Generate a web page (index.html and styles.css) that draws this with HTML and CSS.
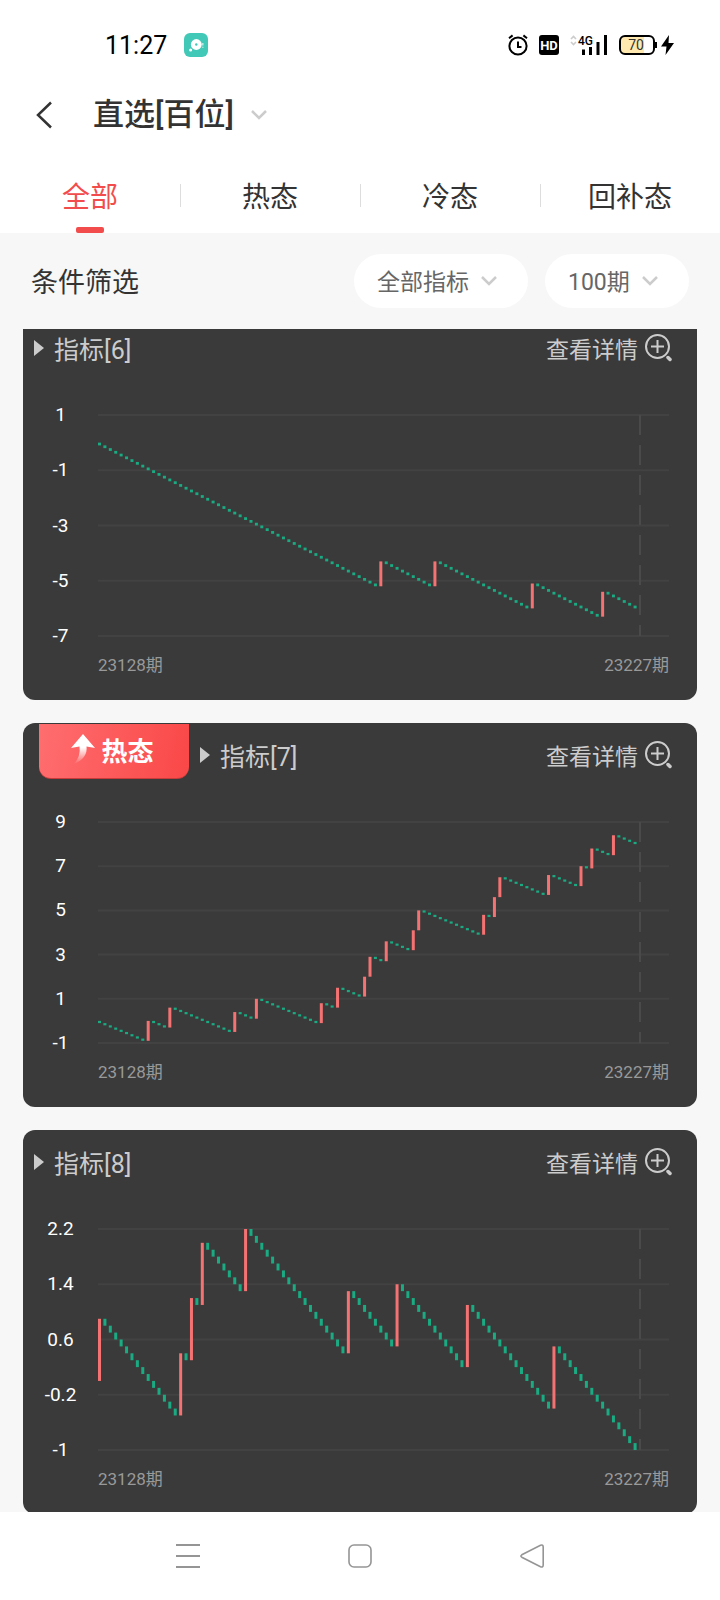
FILE: index.html
```html
<!DOCTYPE html>
<html lang="zh-CN">
<head>
    <meta charset="utf-8">
    <title>直选[百位]</title>
    <meta name="viewport" content="width=device-width, initial-scale=1">
    <link rel="stylesheet" href="styles.css">
</head>
<body>
    <div class="status-bar">
        <span class="time">11:27</span>
        <svg class="app-icon" width="24" height="24" viewBox="0 0 24 24">
            <rect width="24" height="24" rx="6" fill="#42c8b7"/>
            <circle cx="12.3" cy="11.5" r="5.4" fill="#fff"/>
            <circle cx="12.3" cy="11.5" r="1.2" fill="#42c8b7"/>
            <circle cx="6.6" cy="17" r="1.5" fill="#fff"/>
            <path d="M18.8 10v2.5M18.8 13.8v1" stroke="#c5eee8" stroke-width="1.4"/>
        </svg>
        <div class="status-icons">
            <svg width="20" height="22" viewBox="0 0 20 22" fill="none" stroke="#000" stroke-width="2">
                <circle cx="10" cy="12" r="8.6"/>
                <path d="M10 7.5V13h3.5M1 4.2L4.6 1.4M19 4.2L15.4 1.4"/>
            </svg>
            <svg width="20" height="20" viewBox="0 0 20 20">
                <rect width="20" height="20" rx="3" fill="#000"/>
                <text class="hd-text" x="10" y="15" text-anchor="middle">HD</text>
            </svg>
            <svg width="38" height="24" viewBox="0 -2 38 24">
                <path d="M1 4l2.5-2.5L6 4M1 7l2.5 2.5L6 7" fill="none" stroke="#ccc" stroke-width="1.6"/>
                <text class="net-text" x="8" y="10">4G</text>
                <path d="M13.5 14.5V20M20.5 12v8M28 7v13M35.5 0v20" stroke="#000" stroke-width="3"/>
            </svg>
            <svg width="56" height="20" viewBox="0 0 56 20">
                <rect x="1" y="1" width="34" height="18" rx="5" fill="#fff"/>
                <path d="M6 1h19v18H6a5 5 0 0 1-5-5V6a5 5 0 0 1 5-5z" fill="#ffe9b0"/>
                <rect x="1" y="1" width="34" height="18" rx="5" fill="none" stroke="#000" stroke-width="2"/>
                <path d="M37 7v6" stroke="#000" stroke-width="2"/>
                <text class="battery-text" x="17" y="15" text-anchor="middle">70</text>
                <path d="M50 0L42 11.5h5.5L46.5 20L55 8h-5.5z" fill="#000"/>
            </svg>
        </div>
    </div>

    <header class="title-bar">
        <button class="icon-btn back-btn" aria-label="返回">
            <svg width="16" height="28" viewBox="0 0 16 28" fill="none" stroke="#333" stroke-width="2.5"><path d="M15 1.5L2 14l13 12.5"/></svg>
        </button>
        <h1>直选[百位]</h1>
        <button class="icon-btn" aria-label="切换">
            <svg width="18" height="12" viewBox="0 0 18 12" fill="none" stroke="#ccc" stroke-width="2.5"><path d="M2 2l7 7 7-7"/></svg>
        </button>
    </header>

    <nav class="tabs">
        <a href="#all" class="active">全部</a>
        <a href="#hot">热态</a>
        <a href="#cold">冷态</a>
        <a href="#back">回补态</a>
    </nav>

    <div class="filter-bar">
        <span class="filter-label">条件筛选</span>
        <div class="pill">
            <select aria-label="指标">
                <option>全部指标</option>
            </select>
            <svg width="18" height="12" viewBox="0 0 18 12" fill="none" stroke="#ccc" stroke-width="2.5"><path d="M2 2l7 7 7-7"/></svg>
        </div>
        <div class="pill">
            <select aria-label="期数">
                <option>100期</option>
            </select>
            <svg width="18" height="12" viewBox="0 0 18 12" fill="none" stroke="#ccc" stroke-width="2.5"><path d="M2 2l7 7 7-7"/></svg>
        </div>
    </div>

    <main class="card-list" id="cardList">
        <!-- Cards are added by script.js -->
    </main>

    <nav class="bottom-nav">
        <button class="icon-btn" aria-label="菜单">
            <svg width="24" height="24" viewBox="0 0 24 24" stroke="#959595" stroke-width="2"><path d="M0 1h24M0 12h24M0 23h24"/></svg>
        </button>
        <button class="icon-btn" aria-label="主页">
            <svg width="24" height="24" viewBox="0 0 24 24" fill="none" stroke="#959595" stroke-width="1.6"><rect x="1" y="1" width="22" height="22" rx="5"/></svg>
        </button>
        <button class="icon-btn" aria-label="后退">
            <svg width="24" height="24" viewBox="0 0 24 24" fill="none" stroke="#959595" stroke-width="1.6"><path d="M1.8 10.8L20.5 1.2Q23.2 0.4 23.2 3V21Q23.2 23.6 20.5 22.8L1.8 13.2Q0 12 1.8 10.8z"/></svg>
        </button>
    </nav>
    <script src="script.js"></script>
</body>
</html>
```
FILE: styles.css
```css
* {
    box-sizing: border-box;
}
body {
    font-family: Roboto, "Noto Sans CJK SC", sans-serif;
    margin: 0;
    height: 100vh;
    display: flex;
    flex-direction: column;
    background: #f7f7f7;
    color: #333;
}
svg {
    display: block;
    flex: none;
}
.icon-btn {
    border: none;
    background: none;
    padding: 0;
    cursor: pointer;
}

/* status bar */
.status-bar {
    flex: none;
    height: 90px;
    padding: 0 45px 0 105px;
    display: flex;
    align-items: center;
    background: #fff;
    color: #000;
}
.time {
    font-size: 25px;
}
.app-icon {
    margin-left: 17px;
}
.status-icons {
    margin-left: auto;
    display: flex;
    align-items: center;
    gap: 11px;
}
.hd-text {
    font-size: 13px;
    font-weight: bold;
    fill: #fff;
}
.net-text {
    font-size: 12px;
    font-weight: 500;
}
.battery-text {
    font-size: 14px;
    fill: #333;
}

/* title and tabs */
.title-bar {
    flex: none;
    height: 69px;
    padding: 0 36px 19px;
    display: flex;
    align-items: center;
    background: #fff;
}
.back-btn {
    margin-right: 41px;
}
.title-bar h1 {
    margin: 0 16px 0 0;
    font-size: 31px;
    line-height: 40px;
    font-weight: 500;
}
.tabs {
    flex: none;
    height: 74px;
    display: flex;
    background: #fff;
}
.tabs a {
    flex: 1;
    padding-bottom: 2px;
    display: flex;
    align-items: center;
    justify-content: center;
    position: relative;
    color: #333;
    font-size: 28px;
    text-decoration: none;
}
.tabs a + a::before {
    content: "";
    position: absolute;
    left: 0;
    width: 1px;
    height: 23px;
    background: #ddd;
}
.tabs .active {
    color: #f24c4c;
}
.tabs .active::after {
    content: "";
    position: absolute;
    bottom: 0;
    width: 28px;
    height: 6px;
    border-radius: 2px;
    background: #f24c4c;
}

/* filters */
.filter-bar {
    flex: none;
    height: 96px;
    padding: 0 31px;
    display: flex;
    align-items: center;
    gap: 17px;
}
.filter-label {
    margin-right: auto;
    padding-bottom: 2px;
    font-size: 27px;
}
.pill {
    position: relative;
}
.pill select {
    appearance: none;
    height: 54px;
    padding: 2px 59px 0 23px;
    border: none;
    border-radius: 27px;
    background: #fff;
    color: #666;
    font-family: inherit;
    font-size: 23px;
}
.pill svg {
    position: absolute;
    right: 30px;
    top: 21px;
    pointer-events: none;
}

/* cards */
.card-list {
    flex: 1;
    min-height: 0;
    padding: 0 23px;
    overflow: hidden;
}
.card {
    margin-bottom: 23px;
    padding-bottom: 23px;
    border-radius: 12px;
    background: #3a3a3a;
    color: #ccc;
}
/* list is scrolled a little under the filters */
.card:first-child {
    margin-top: -13px;
}
.card-header {
    height: 64px;
    padding-right: 25px;
    display: flex;
    align-items: center;
}
.hot-badge {
    align-self: flex-start;
    width: 150px;
    height: 55px;
    margin: 1px 0 0 16px;
    padding-bottom: 4px;
    display: flex;
    align-items: center;
    justify-content: center;
    gap: 5px;
    border-radius: 0 0 12px 12px;
    border-bottom: 1px solid #c93b3b;
    background: linear-gradient(100deg, #ff6e70, #fa4747);
    color: #fff;
    font-size: 26px;
    font-weight: bold;
}
.hot-badge svg {
    margin-left: -4px;
}
.card h2 {
    margin: 0 auto 0 11px;
    display: flex;
    align-items: center;
    gap: 10px;
    font-size: 25px;
    font-weight: normal;
}
.detail-link {
    display: flex;
    align-items: center;
    gap: 7px;
    color: #ccc;
    font-size: 23px;
    text-decoration: none;
}
.chart {
    display: flex;
    margin-top: 34px;
    padding-right: 28px;
}
.y-axis {
    width: 75px;
    flex: none;
    margin: -11px 0;
    display: flex;
    flex-direction: column;
    justify-content: space-between;
    color: #fff;
    font-size: 19px;
    line-height: 24px;
    text-align: center;
}
.plot {
    flex: 1;
    min-width: 0;
    height: 223px;
}
.grid-line {
    stroke: #424242;
    stroke-width: 2;
}
.now-line {
    stroke: #4a4a4a;
    stroke-width: 2;
    stroke-dasharray: 20 10;
}
.bar-up {
    fill: #f47272;
}
.bar-down {
    fill: #1aab83;
}
.x-axis {
    margin: 16px 28px 0 75px;
    display: flex;
    justify-content: space-between;
    color: #999;
    font-size: 17px;
    line-height: 24px;
}

/* system navigation */
.bottom-nav {
    flex: none;
    height: 88px;
    padding: 0 28px;
    display: flex;
    align-items: center;
    justify-content: space-evenly;
    background: #fff;
}
```
FILE: script.js
```js
// ups: periods where the indicator hit, every other period loses 0.1
const charts = [
    { id: 6, labels: [1, -1, -3, -5, -7], ups: [52, 62, 80, 93] },
    {
        id: 7, hot: true, labels: [9, 7, 5, 3, 1, -1],
        ups: [9, 13, 25, 29, 41, 44, 49, 50, 53, 58, 59, 71, 73, 74, 83, 89, 91, 95]
    },
    { id: 8, labels: [2.2, 1.4, 0.6, -0.2, -1], ups: [0, 15, 17, 19, 27, 46, 55, 68, 84] }
];

const PERIODS = 100;
const WIDTH = 571;
const HEIGHT = 221;
const STEP = 5.41;

const badge = `
    <span class="hot-badge">
        <svg width="26" height="32" viewBox="0 0 26 32">
            <defs>
                <linearGradient id="arrowFade" x1="0" y1="0" x2="0" y2="1">
                    <stop offset="0.45" stop-color="#fff"/>
                    <stop offset="1" stop-color="#fff" stop-opacity="0"/>
                </linearGradient>
            </defs>
            <path d="M13 1L25 15Q21 14 16.5 13.5Q18 25 4 31Q11 23 9.5 13.5Q5 14 1 15z" fill="url(#arrowFade)"/>
        </svg>
        热态
    </span>`;

function drawPlot(chart) {
    const max = chart.labels[0];
    const min = chart.labels[chart.labels.length - 1];
    const toY = value => 1 + (max - value) / (max - min) * HEIGHT;

    const grid = chart.labels.map(label =>
        `<line class="grid-line" x1="0" x2="${WIDTH}" y1="${toY(label)}" y2="${toY(label)}"/>`
    ).join('');

    let value = 0;
    let bars = '';
    for (let i = 0; i < PERIODS; i++) {
        const up = chart.ups.includes(i);
        const next = value + (up ? 0.9 : -0.1);
        const top = toY(Math.max(value, next));
        const height = Math.abs(toY(value) - toY(next));
        bars += `<rect class="${up ? 'bar-up' : 'bar-down'}" x="${i * STEP}" y="${top}" width="3" height="${height}"/>`;
        value = next;
    }

    return `
        <svg class="plot" viewBox="0 0 ${WIDTH} 223" preserveAspectRatio="none">
            ${grid}
            <line class="now-line" x1="542" x2="542" y1="1" y2="222"/>
            ${bars}
        </svg>`;
}

document.getElementById('cardList').innerHTML = charts.map(chart => `
    <section class="card">
        <div class="card-header">
            ${chart.hot ? badge : ''}
            <h2>
                <svg width="10" height="16" viewBox="0 0 10 16" fill="#ccc"><path d="M0 0l10 8-10 8z"/></svg>
                指标[${chart.id}]
            </h2>
            <a class="detail-link" href="#detail-${chart.id}">
                查看详情
                <svg width="27" height="28" viewBox="0 0 27 28" fill="none" stroke="#ccc" stroke-width="2">
                    <circle cx="12.5" cy="12.5" r="11.5"/>
                    <path d="M12.5 6v13M6 12.5h13"/>
                    <path d="M23 23.5l2 2" stroke-width="3.5" stroke-linecap="round"/>
                </svg>
            </a>
        </div>
        <div class="chart">
            <div class="y-axis">${chart.labels.map(label => `<span>${label}</span>`).join('')}</div>
            ${drawPlot(chart)}
        </div>
        <div class="x-axis"><span>23128期</span><span>23227期</span></div>
    </section>
`).join('');
```
